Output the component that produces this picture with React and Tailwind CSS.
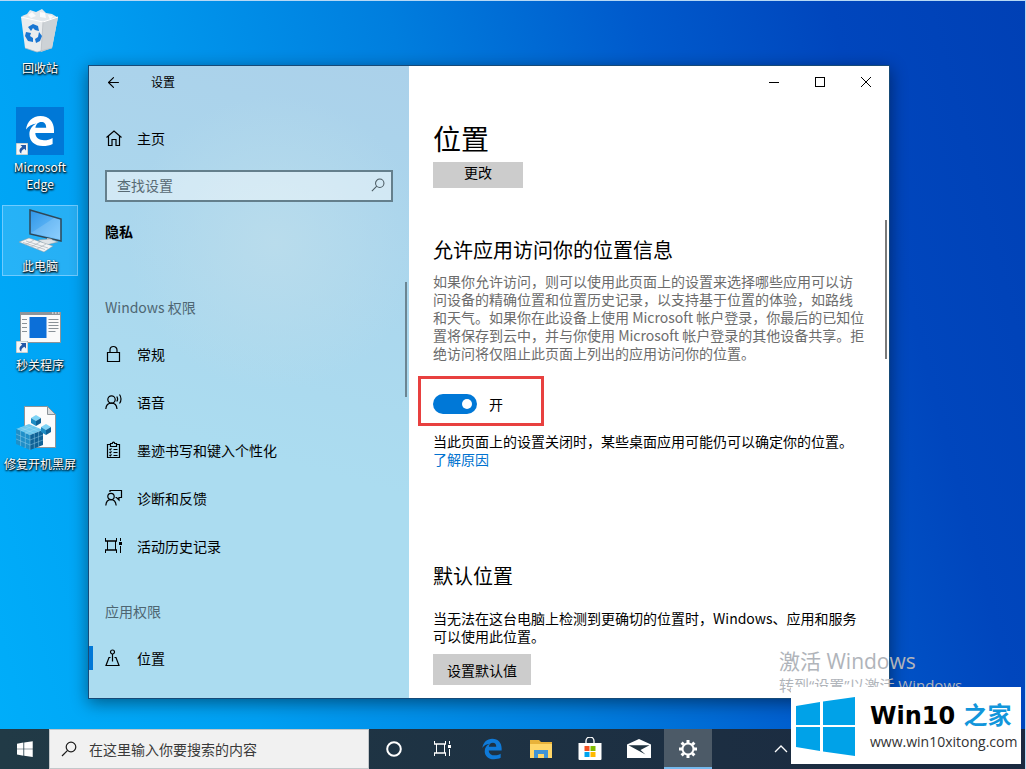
import { useState } from "react";
import { ArrowLeft } from "lucide-react";

function WindowsLogo({ className }) {
	return (
		<svg viewBox="0 0 60 60" className={className} fill="currentColor" aria-hidden="true">
			<path d="M0 10 L24 6 V29 H0Z M27 5.5 L59 1 V29 H27Z M0 31 H24 V55 L0 51Z M27 31 H59 V60 L27 55.5Z" />
		</svg>
	);
}

function EdgeLogo({ className }) {
	return (
		<svg viewBox="0 0 32 32" className={className} fill="currentColor" aria-hidden="true">
			<path
				fillRule="evenodd"
				d="M2 14.6C3 6.500 8.600 1 16.400 1 25 1 30 7 30 15v3H11.300c.2 5.100 4.200 7.200 8.700 7.200 3.300 0 6-.8 8.600-2.300v6C26 30.400 22.500 31 18.800 31 10.500 31 5.400 26 5.400 19.200c0-5 2.800-8.700 7.200-10.700C7.800 9 4.300 11 2 14.600zM11.400 12.800H22.200C22.200 9 20.400 7 17.300 7 14 7 12 9.300 11.400 12.800z"
			/>
		</svg>
	);
}

function SearchIcon({ className }) {
	return (
		<svg viewBox="0 0 16 16" className={className} fill="none" stroke="currentColor" strokeWidth="1.200" aria-hidden="true">
			<circle cx="10" cy="6" r="4.800" />
			<path d="M6.600 9.400L1 15" />
		</svg>
	);
}

function TimelineIcon({ className }) {
	return (
		<svg viewBox="0 0 18 18" className={className} fill="none" stroke="currentColor" aria-hidden="true">
			<path d="M.5 1v3M.5 13v3M11.500 1v3M11.500 13v3" />
			<path d="M0 4h12M0 13h12" strokeWidth="1.500" />
			<path d="M2.500 4v9M10.500 4v9M15.500 1v3M15.500 9v7" />
			<path d="M14 6.500h3" strokeWidth="3" />
		</svg>
	);
}

// 左侧导航图标
const navIcons = {
	home: <path d="M1.500 8.500L9 2l7.500 6.500M3.500 7v9.500h3.500v-6h4v6h3.500V7" />,
	lock: <path d="M2.500 7.500h12v9h-12zM5 7.500V5a3.500 3.500 0 0 1 7 0v2.500" />,
	speech: (
		<>
			<circle cx="6.500" cy="6.500" r="3.700" />
			<path d="M.8 16c.3-3.600 2.600-5.800 5.700-5.800s5.200 2 5.500 5.800M11.800 3.500c1 1.500 1 3.500 0 5M14.500 1.500c2 2.500 2 6.500 0 9" />
		</>
	),
	ink: (
		<path d="M6 3.500H2.500v13h12v-13H11M5.500 2.500h1.800c0-1.800 2.400-1.800 2.400 0h1.800v3h-6zM4.500 8l.8.8 1.200-1.500M4.500 11l.8.8 1.200-1.500M4.500 14l.8.8 1.200-1.500M8.500 8.500h4M8.500 11.500h4M8.500 14.500h4" />
	),
	feedback: (
		<>
			<circle cx="6" cy="7.500" r="3.200" />
			<path d="M.8 16.500c.3-3.600 2.300-5.800 5.200-5.800s4.700 2 5.200 5.800M5 3V1.500h11.500v7H14v2.500l-2.500-2.500h-1" />
		</>
	),
	location: (
		<>
			<circle cx="7.500" cy="3" r="2" />
			<path d="M7.500 5v7.500M5.500 8.500H4l-3 8h13l-3-8H9.500" />
		</>
	),
};

function NavIcon({ name }) {
	if (name === "timeline") return <TimelineIcon className="size-[18px]" />;
	return (
		<svg viewBox="0 0 18 18" className="size-[18px]" fill="none" stroke="currentColor" strokeWidth="1.200" aria-hidden="true">
			{navIcons[name]}
		</svg>
	);
}

const permissions = [
	{ icon: "lock", label: "常规" },
	{ icon: "speech", label: "语音" },
	{ icon: "ink", label: "墨迹书写和键入个性化" },
	{ icon: "feedback", label: "诊断和反馈" },
	{ icon: "timeline", label: "活动历史记录" },
];

function NavItem({ icon, label, active }) {
	return (
		<a href="#" className="flex h-12 items-center">
			<span className={active ? "h-6 w-1 bg-[#0078d7]" : "h-6 w-1"} />
			<span className="ml-3 flex w-8 items-center">
				<NavIcon name={icon} />
			</span>
			{label}
		</a>
	);
}

function Sidebar() {
	return (
		<nav className="relative w-2/5 shrink-0 bg-[#abd8ec] bg-[radial-gradient(circle_at_58%_28%,#b9dcec_0,transparent_30%),linear-gradient(15deg,#abdcf0_40%,#abd1ea_100%)] text-sm text-black">
			<div className="flex h-8 items-center px-4">
				<button aria-label="返回" className="w-[46px]">
					<ArrowLeft size={17} strokeWidth={1.5} />
				</button>
				<span className="text-xs">设置</span>
			</div>
			<div className="mt-4">
				<NavItem icon="home" label="主页" />
			</div>
			<label className="mx-4 mt-2 flex h-8 items-center border-2 border-[#647f8c] bg-white/45 pb-0.5 pl-2.5 pr-1.5">
				<input
					type="text"
					aria-label="查找设置"
					placeholder="查找设置"
					className="min-w-0 flex-1 bg-transparent outline-none placeholder:text-[#586a73]"
				/>
				<SearchIcon className="size-3.5 text-[#4a5a62]" />
			</label>
			<h2 className="mx-4 mt-[19px] font-bold leading-5">隐私</h2>
			<h3 className="mx-4 mt-14 leading-5 text-[#4e6672]">Windows 权限</h3>
			<div className="mt-[13px]">
				{permissions.map((item) => (
					<NavItem key={item.label} icon={item.icon} label={item.label} />
				))}
			</div>
			<h3 className="mx-4 mt-[31px] leading-5 text-[#4e6672]">应用权限</h3>
			<div className="mt-[13px]">
				<NavItem icon="location" label="位置" active />
			</div>
			<div className="absolute right-0.5 top-[216px] h-[115px] w-0.5 bg-[#6b8592]" />
		</nav>
	);
}

function WindowControls() {
	return (
		<div className="flex h-8 justify-end text-black">
			<button aria-label="最小化" className="flex w-[46px] items-center justify-center">
				<span className="h-px w-2.5 bg-black" />
			</button>
			<button aria-label="最大化" className="flex w-[46px] items-center justify-center">
				<span className="size-[10px] border border-black" />
			</button>
			<button aria-label="关闭" className="flex w-[46px] items-center justify-center">
				<svg viewBox="0 0 12 12" className="size-3" stroke="currentColor" aria-hidden="true">
					<path d="M1 1l10 10M11 1L1 11" />
				</svg>
			</button>
		</div>
	);
}

function SettingsContent() {
	const [enabled, setEnabled] = useState(true);

	return (
		<main className="relative min-w-0 flex-1 bg-white text-sm text-black">
			<WindowControls />
			<div className="px-6">
				<h1 className="mt-5 text-[28px] leading-10">位置</h1>
				<button className="mt-1 h-[26px] w-[90px] bg-[#ccc] pb-1.5">更改</button>

				<h2 className="mt-12 text-xl leading-7">允许应用访问你的位置信息</h2>
				<p className="mt-2 leading-[18px] text-[#6c6c6c]">
					如果你允许访问，则可以使用此页面上的设置来选择哪些应用可以访问设备的精确位置和位置历史记录，以支持基于位置的体验，如路线和天气。如果你在此设备上使用
					Microsoft 帐户登录，你最后的已知位置将保存到云中，并与你使用 Microsoft
					帐户登录的其他设备共享。拒绝访问将仅阻止此页面上列出的应用访问你的位置。
				</p>
				<label className="-ml-[15px] mt-3.5 flex h-[50px] w-[126px] items-center border-3 border-[#e8403f] pl-3 pt-1.5">
					<input
						type="checkbox"
						checked={enabled}
						onChange={(e) => setEnabled(e.target.checked)}
						className="peer sr-only"
					/>
					<span className="flex h-5 w-11 items-center rounded-full bg-[#999] px-[5px] peer-checked:justify-end peer-checked:bg-[#0078d7]">
						<span className="size-2.5 rounded-full bg-white" />
					</span>
					<span className="ml-3">{enabled ? "开" : "关"}</span>
				</label>
				<p className="mt-1.5 leading-[18px]">
					当此页面上的设置关闭时，某些桌面应用可能仍可以确定你的位置。
				</p>
				<a href="#" className="block leading-[18px] text-[#0072d0]">
					了解原因
				</a>

				<h2 className="mt-[94px] text-xl leading-7">默认位置</h2>
				<p className="mt-[19px] leading-[18px]">
					当无法在这台电脑上检测到更确切的位置时，Windows、应用和服务可以使用此位置。
				</p>
				<button className="mb-[13px] mt-[9px] h-[31px] w-[98px] bg-[#ccc]">设置默认值</button>
			</div>
			<div className="absolute right-0.5 top-[154px] h-[139px] w-0.5 bg-[#7a7a7a]" />
		</main>
	);
}

function ShortcutArrow() {
	return (
		<svg viewBox="0 0 12 12" className="absolute bottom-0 left-0 size-3" aria-hidden="true">
			<path d="M0 0h12v12H0z" fill="#f4f6f8" stroke="#9aa" />
			<path d="M4.500 2h5.500v5.500L8.300 5.800C6 7 5.200 8.500 5.300 10.500 3 9 2.500 6 6.200 3.700z" fill="#2458a6" />
		</svg>
	);
}

function RecycleBinIcon() {
	return (
		<svg viewBox="0 0 48 48" className="size-12" aria-hidden="true">
			<path d="M6 8l5-2 3-4 6 2 6-3 4 4 6 1 5 3-3 5H9z" fill="#e3e8ec" />
			<path d="M12 7l4-3 4 4-5 2zM24 4l5 1 1 5-6-1zM32 7l5 1-3 4z" fill="#fafbfc" />
			<path d="M5 9l22 5 15-5-6 31-15 4-12-4z" fill="#e9ecee" />
			<path d="M27 14l15-5-6 31-11 4z" fill="#cdd2d6" />
			<path d="M5 9l22 5 15-5" fill="none" stroke="#fff" />
			<path d="M27 14l-2 30M9 40l12 4 15-4" fill="none" stroke="#b4bac0" strokeWidth=".7" />
			<path
				d="M12 19l5-3 5 2 1 5-4-1-2-2-2 3zM23 24l3 4-2 5-4 2-1-4 3-2zM10 24l5 1-1 3 3 2v4l-5-1-3-5z"
				fill="#1976d2"
			/>
		</svg>
	);
}

function EdgeTileIcon() {
	return (
		<span className="relative flex size-12 items-center justify-center bg-[#0078d7] text-white">
			<EdgeLogo className="size-8" />
			<ShortcutArrow />
		</span>
	);
}

function ThisPcIcon() {
	return (
		<svg viewBox="0 0 48 48" className="size-12" aria-hidden="true">
			<defs>
				<linearGradient id="pc-screen" x1="0" y1="0" x2="1" y2="1">
					<stop offset="0" stopColor="#2f96e8" />
					<stop offset="1" stopColor="#7cc9ff" />
				</linearGradient>
			</defs>
			<path d="M14 4l31 9v22l-31-7z" fill="url(#pc-screen)" stroke="#2f4757" strokeWidth="1.500" />
			<path d="M15 27L38 12l6 2v19z" fill="#fff" opacity=".15" />
			<path d="M31 32l5 1v3h-5z" fill="#c7ced4" />
			<path d="M22 34l12-1 8 3-12 3z" fill="#dfe4e8" stroke="#8c98a1" strokeWidth=".5" />
			<path d="M3 36l10-4 24 8-9 6z" fill="#f2f4f5" stroke="#8c98a1" strokeWidth=".5" />
			<path d="M7 36.500l22 7M10 35l22 7M9 39l9-5M15 41l9-5M21 43l9-5" stroke="#aab3ba" strokeWidth=".7" />
		</svg>
	);
}

function ProgramIcon() {
	return (
		<span className="relative flex size-12 items-end justify-center">
			<svg viewBox="0 0 48 48" className="size-12" aria-hidden="true">
				<path d="M4.500 7.500h40v30h-40z" fill="#fafafa" stroke="#8d9499" />
				<path d="M4 7h41v3H4z" fill="#8d9499" />
				<path d="M36 8h1.500M39 8h1.500M42 8h1.500" stroke="#fff" />
				<path d="M13.500 12h17v21h-17z" fill="#0c6fd8" />
				<path d="M6 14.500h5M6 18.500h5M6 22.500h5M6 26.500h5M32.500 14.500h10M32.500 17.500h10M32.500 20.500h10M32.500 23.500h10M32.500 26.500h7" stroke="#8a9298" />
			</svg>
			<ShortcutArrow />
		</span>
	);
}

function Cube({ x, y }) {
	return (
		<g transform={`translate(${x} ${y})`}>
			<path d="M0 3l5-3 5 3-5 3z" fill="#7ed3f5" />
			<path d="M0 3l5 3v5L0 8z" fill="#1e8cc4" />
			<path d="M10 3L5 6v5l5-3z" fill="#0f6296" />
		</g>
	);
}

function RegistryIcon() {
	return (
		<svg viewBox="0 0 48 48" className="size-12" aria-hidden="true">
			<path d="M8.500 2.500h23l8 8v33h-31z" fill="#fcfcfc" stroke="#8d9499" />
			<path d="M31.500 2.500v8h8z" fill="#d9dde0" stroke="#8d9499" />
			<path d="M0 25l13-5 14 6-13 5z" fill="#6cc8ee" />
			<path d="M0 25l14 6v15L0 40z" fill="#1f8fc8" />
			<path d="M27 26l-13 5v15l13-5z" fill="#0f6296" />
			<path
				d="M4.300 23.300l14 6M8.600 21.600l14 6M4.600 27l13-5M9.300 29l13-5M0 30l14 6 13-5M0 35l14 6 13-5M4.600 27v15M9.300 29v15M18.300 29.300v15M22.600 27.600v15M14 31v15"
				fill="none"
				stroke="#a9def5"
				strokeWidth=".4"
			/>
			<Cube x={15} y={11} />
			<Cube x={25} y={20} />
		</svg>
	);
}

const shortcuts = [
	{ label: "回收站", icon: <RecycleBinIcon /> },
	{ label: "Microsoft Edge", icon: <EdgeTileIcon /> },
	{ label: "此电脑", icon: <ThisPcIcon />, selected: true },
	{ label: "秒关程序", icon: <ProgramIcon /> },
	{ label: "修复开机黑屏", icon: <RegistryIcon /> },
];

function DesktopShortcut({ label, icon, selected }) {
	return (
		<a
			href="#"
			className={
				selected
					? "flex h-[71px] w-[76px] flex-col items-center border border-[#6fcbff] bg-white/15"
					: "flex h-[71px] w-[76px] flex-col items-center border border-transparent"
			}
		>
			<span className="shrink-0">{icon}</span>
			<span className="mt-[3px] text-center text-xs leading-[17px] text-white [text-shadow:1px_1px_2px_#000,0_1px_2px_#000]">
				{label}
			</span>
		</a>
	);
}

function ExplorerIcon() {
	return (
		<svg viewBox="0 0 24 24" className="size-6" aria-hidden="true">
			<path d="M1 3h9l2 2h11v16H1z" fill="#e8b23a" />
			<path d="M1 7h22v14H1z" fill="#ffd668" />
			<path d="M5 21v-8h14v8h-4v-4H9v4z" fill="#3f93d6" />
		</svg>
	);
}

function StoreIcon() {
	return (
		<svg viewBox="0 0 24 24" className="size-6" aria-hidden="true">
			<path d="M8 7V4a4 4 0 0 1 8 0v3" fill="none" stroke="#fff" strokeWidth="1.300" />
			<path d="M0.500 6h23v16a1 1 0 0 1-1 1h-21a1 1 0 0 1-1-1z" fill="#fff" />
			<path d="M6.500 9h5v5h-5z" fill="#f25022" />
			<path d="M12.500 9h5v5h-5z" fill="#7fba00" />
			<path d="M6.500 15h5v5h-5z" fill="#00a4ef" />
			<path d="M12.500 15h5v5h-5z" fill="#ffb900" />
		</svg>
	);
}

function MailIcon() {
	return (
		<svg viewBox="0 0 24 24" className="size-6" aria-hidden="true">
			<path d="M0 7.500L12 2l12 5.500V21H0z" fill="#fff" />
			<path d="M1.500 8.300h21L13.500 13l5 4.500z" fill="#203340" />
		</svg>
	);
}

function GearIcon() {
	return (
		<svg viewBox="0 0 20 20" className="size-5" fill="none" stroke="#fff" aria-hidden="true">
			<circle cx="10" cy="10" r="5.500" strokeWidth="2" />
			<path
				d="M10 1v3M10 16v3M1 10h3M16 10h3M3.600 3.600l2.200 2.200M14.200 14.200l2.200 2.200M3.600 16.400l2.200-2.200M14.200 5.800l2.200-2.200"
				strokeWidth="3"
			/>
		</svg>
	);
}

const taskbarApps = [
	{
		label: "Cortana",
		icon: (
			<svg viewBox="0 0 18 18" className="size-[18px]" fill="none" stroke="#fff" strokeWidth="2" aria-hidden="true">
				<circle cx="9" cy="9" r="6.800" />
			</svg>
		),
	},
	{ label: "任务视图", icon: <TimelineIcon className="size-[18px] text-white" /> },
	{ label: "Microsoft Edge", icon: <EdgeLogo className="size-[22px] text-[#0f7ad8]" /> },
	{ label: "文件资源管理器", icon: <ExplorerIcon /> },
	{ label: "Microsoft Store", icon: <StoreIcon /> },
	{ label: "邮件", icon: <MailIcon /> },
	{ label: "设置", icon: <GearIcon />, active: true },
];

function Taskbar() {
	return (
		<footer className="flex h-10 bg-linear-to-r from-[#213a46] to-[#1a2940]">
			<button aria-label="开始" className="flex w-[49px] items-center justify-center text-white">
				<WindowsLogo className="size-4" />
			</button>
			<label className="flex w-80 items-center border border-[#c3c7ca] bg-[#f1f1f1] px-[11px] text-[#1c1c1c]">
				<SearchIcon className="size-4" />
				<input
					type="text"
					aria-label="搜索"
					placeholder="在这里输入你要搜索的内容"
					className="ml-3 min-w-0 flex-1 bg-transparent text-sm outline-none placeholder:text-[#3a3a3a]"
				/>
			</label>
			{taskbarApps.map((app) => (
				<button
					key={app.label}
					aria-label={app.label}
					className={
						app.active
							? "ml-px flex w-12 items-center justify-center border-b-2 border-[#76b9ed] bg-[#4c5a67] pt-0.5"
							: "flex w-[49px] items-center justify-center"
					}
				>
					{app.icon}
				</button>
			))}
			<button aria-label="显示隐藏的图标" className="ml-[61px] flex w-4 items-center justify-center text-white">
				<svg viewBox="0 0 14 14" className="size-3.5" fill="none" stroke="currentColor" strokeWidth="1.300" aria-hidden="true">
					<path d="M1 10l6-6 6 6" />
				</svg>
			</button>
		</footer>
	);
}

export default function App() {
	return (
		<div className="relative flex min-h-screen flex-col overflow-hidden border-r border-t border-[#b5d8f5] bg-[#0094ea] bg-[linear-gradient(75deg,#00aefa_0%,#009ff2_22%,#007ede_48%,#005acc_68%,#0046bd_84%,#0040b5_100%)] font-['Noto_Sans_CJK_SC',sans-serif]">
			<div className="relative flex-1">
				<div className="flex w-20 flex-col gap-[28px] pl-0.5 pt-1.5">
					{shortcuts.map((item) => (
						<DesktopShortcut key={item.label} {...item} />
					))}
				</div>
				<div className="absolute left-[88px] right-[135px] top-16 flex border border-[#164a78] shadow-[0_4px_16px_rgba(0,0,0,0.45)]">
					<Sidebar />
					<SettingsContent />
				</div>
			</div>
			<Taskbar />

			<div className="absolute bottom-[74px] right-[55px] w-[191px] whitespace-nowrap font-['Open_Sans','Noto_Sans_CJK_SC',sans-serif] text-[#b0b4ba]">
				<p className="text-[21px] leading-7">激活 Windows</p>
				<p className="text-[15px] leading-5">转到“设置”以激活 Windows</p>
			</div>
			<div className="absolute bottom-[5px] right-1 flex h-[77px] w-[230px] items-center bg-white pl-[5px]">
				<WindowsLogo className="size-[60px] text-[#00a2e8]" />
				<div className="ml-3.5 whitespace-nowrap">
					<p className="font-['DejaVu_Sans','Noto_Sans_CJK_SC',sans-serif] text-2xl font-bold leading-8 text-black">
						Win10 <span className="text-[#1296db]">之家</span>
					</p>
					<p className="font-['Open_Sans',sans-serif] text-sm leading-5 text-[#333]">www.win10xitong.com</p>
				</div>
			</div>
		</div>
	);
}
